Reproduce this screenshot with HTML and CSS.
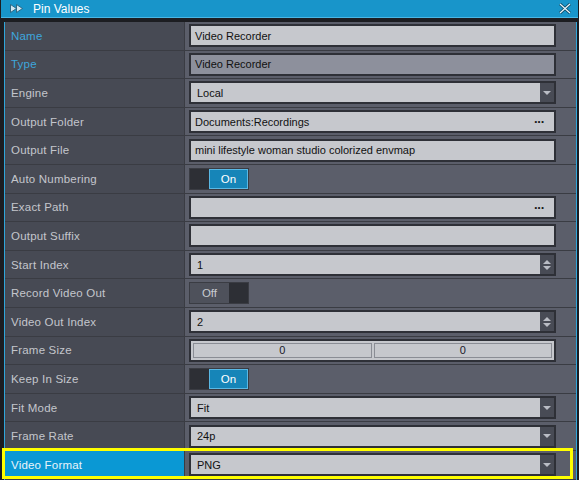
FILE: index.html
```html
<!DOCTYPE html>
<html lang="en">
<head>
    <meta charset="UTF-8">
    <title>Pin Values</title>
    <link rel="stylesheet" href="styles.css">
</head>
<body>
    <div class="window">
        <div class="titleBar">
            <svg class="titleIcon" width="14" height="9" viewBox="0 0 14 9">
                <path d="M0.5 0.5 L6.5 4.5 L0.5 8.5 Z M6.5 0.5 L12.5 4.5 L6.5 8.5 Z" fill="#cfe6f1" stroke="#25607c" stroke-width="0.9"/>
            </svg>
            <span class="titleText">Pin Values</span>
            <svg class="closeIcon" width="12" height="11" viewBox="0 0 12 11">
                <path d="M1 1 L11 10 M11 1 L1 10" stroke="#0e4a66" stroke-width="3"/>
                <path d="M1 1 L11 10 M11 1 L1 10" stroke="#e8f6fc" stroke-width="1.2"/>
            </svg>
        </div>
        <div class="panel">
            <div class="row">
                <div class="label pin">Name</div>
                <div class="value"><div class="field">Video Recorder</div></div>
            </div>
            <div class="row">
                <div class="label pin">Type</div>
                <div class="value"><div class="field readonly">Video Recorder</div></div>
            </div>
            <div class="row">
                <div class="label">Engine</div>
                <div class="value"><div class="field combo"><span class="txt">Local</span><span class="btn"><i class="arrow"></i></span></div></div>
            </div>
            <div class="row">
                <div class="label">Output Folder</div>
                <div class="value"><div class="field"><span class="txt">Documents:Recordings</span><span class="dots">&middot;&middot;&middot;</span></div></div>
            </div>
            <div class="row">
                <div class="label">Output File</div>
                <div class="value"><div class="field">mini lifestyle woman studio colorized envmap</div></div>
            </div>
            <div class="row">
                <div class="label">Auto Numbering</div>
                <div class="value"><div class="toggle on"><span class="knob"></span><span class="state">On</span></div></div>
            </div>
            <div class="row">
                <div class="label">Exact Path</div>
                <div class="value"><div class="field"><span class="txt"></span><span class="dots">&middot;&middot;&middot;</span></div></div>
            </div>
            <div class="row">
                <div class="label">Output Suffix</div>
                <div class="value"><div class="field"></div></div>
            </div>
            <div class="row">
                <div class="label">Start Index</div>
                <div class="value"><div class="field combo"><span class="txt">1</span><span class="btn"><i class="up"></i><i class="down"></i></span></div></div>
            </div>
            <div class="row">
                <div class="label">Record Video Out</div>
                <div class="value"><div class="toggle off"><span class="state">Off</span><span class="knob"></span></div></div>
            </div>
            <div class="row">
                <div class="label">Video Out Index</div>
                <div class="value"><div class="field combo"><span class="txt">2</span><span class="btn"><i class="up"></i><i class="down"></i></span></div></div>
            </div>
            <div class="row">
                <div class="label">Frame Size</div>
                <div class="value">
                    <div class="field pair">
                        <span class="cell">0</span>
                        <span class="cell">0</span>
                    </div>
                </div>
            </div>
            <div class="row">
                <div class="label">Keep In Size</div>
                <div class="value"><div class="toggle on"><span class="knob"></span><span class="state">On</span></div></div>
            </div>
            <div class="row">
                <div class="label">Fit Mode</div>
                <div class="value"><div class="field combo"><span class="txt">Fit</span><span class="btn"><i class="arrow"></i></span></div></div>
            </div>
            <div class="row">
                <div class="label">Frame Rate</div>
                <div class="value"><div class="field combo"><span class="txt">24p</span><span class="btn"><i class="arrow"></i></span></div></div>
            </div>
            <div class="row selected">
                <div class="label">Video Format</div>
                <div class="value"><div class="field combo"><span class="txt">PNG</span><span class="btn"><i class="arrow"></i></span></div></div>
                <div class="highlight"></div>
            </div>
        </div>
    </div>
</body>
</html>
```

FILE: styles.css
```css
* {
    padding: 0;
    margin: 0;
    box-sizing: border-box;
}

body {
    width: 579px;
    height: 480px;
    overflow: hidden;
    background-color: #1c1d21;
    font-family: "Liberation Sans", "DejaVu Sans", sans-serif;
    font-size: 11px;
}

.window {
    padding-left: 1px;
}

.titleBar {
    height: 18px;
    width: 577px;
    background-color: #1895ca;
    border-bottom: 1px solid #4ab6e4;
    display: flex;
    align-items: center;
    color: #fff;
}

.titleIcon {
    margin-left: 9px;
}

.titleText {
    margin-left: 9px;
    font-size: 12px;
}

.closeIcon {
    margin-left: auto;
    margin-right: 7px;
}

.panel {
    margin-top: 4px;
    margin-left: 3px;
    width: 573px;
    border-left: 1px solid #2fa6da;
    border-right: 1px solid #2fa6da;
    background-color: #5b5e6a;
    position: relative;
}

.row {
    height: 28.6px;
    display: flex;
    border-bottom: 1px solid #3a3c43;
    position: relative;
}

.label {
    width: 180px;
    background-color: #474a54;
    border-right: 1px solid #3a3c43;
    color: #c4c6cc;
    padding-left: 6px;
    display: flex;
    align-items: center;
    font-size: 11.5px;
    letter-spacing: 0.2px;
}

.label.pin {
    color: #3ea6dc;
}

.value {
    flex: 1;
    padding: 0 20px 0 4px;
    display: flex;
    align-items: center;
}

.field {
    width: 100%;
    height: 23px;
    background-color: #c6c8cd;
    border: 2px solid #2e3037;
    color: #111;
    font-size: 11px;
    padding-left: 4px;
    display: flex;
    align-items: center;
}

.field.readonly {
    background-color: #8d909c;
}

.field .txt {
    flex: 1;
}

.combo .txt {
    padding-left: 2px;
}

.field .btn {
    width: 14px;
    height: 100%;
    background-color: #484b55;
    display: flex;
    flex-direction: column;
    align-items: center;
    justify-content: center;
    gap: 2px;
}

.arrow,
.down {
    width: 0;
    height: 0;
    border-left: 4px solid transparent;
    border-right: 4px solid transparent;
    border-top: 4px solid #b9bcc4;
}

.up {
    width: 0;
    height: 0;
    border-left: 4px solid transparent;
    border-right: 4px solid transparent;
    border-bottom: 4px solid #b9bcc4;
}

.dots {
    width: 20px;
    font-weight: bold;
    font-size: 13px;
    letter-spacing: -1px;
    color: #1a1a1a;
}

.field.pair {
    padding: 2px 2px;
    gap: 2px;
    height: 23px;
}

.pair .cell {
    flex: 1;
    height: 100%;
    border: 1px solid #8a8d95;
    display: flex;
    align-items: center;
    justify-content: center;
    color: #1a1a2a;
}

.toggle {
    width: 60px;
    height: 22px;
    border: 1px solid #3a3c43;
    display: flex;
    font-size: 11.5px;
}

.toggle .knob {
    width: 19px;
    background-color: #2d2f35;
}

.toggle .state {
    flex: 1;
    display: flex;
    align-items: center;
    justify-content: center;
}

.toggle.on .state {
    background-color: #1685b8;
    border: 1px solid #5ab8e4;
    color: #fff;
}

.toggle.off .state {
    background-color: #4e515b;
    color: #c8cad0;
}

.selected .label {
    background-color: #0a98d4;
    color: #e8f4fa;
}

.highlight {
    position: absolute;
    left: -3px;
    top: -3px;
    width: 571px;
    height: 31px;
    border: 3px solid #ffff00;
}
```
